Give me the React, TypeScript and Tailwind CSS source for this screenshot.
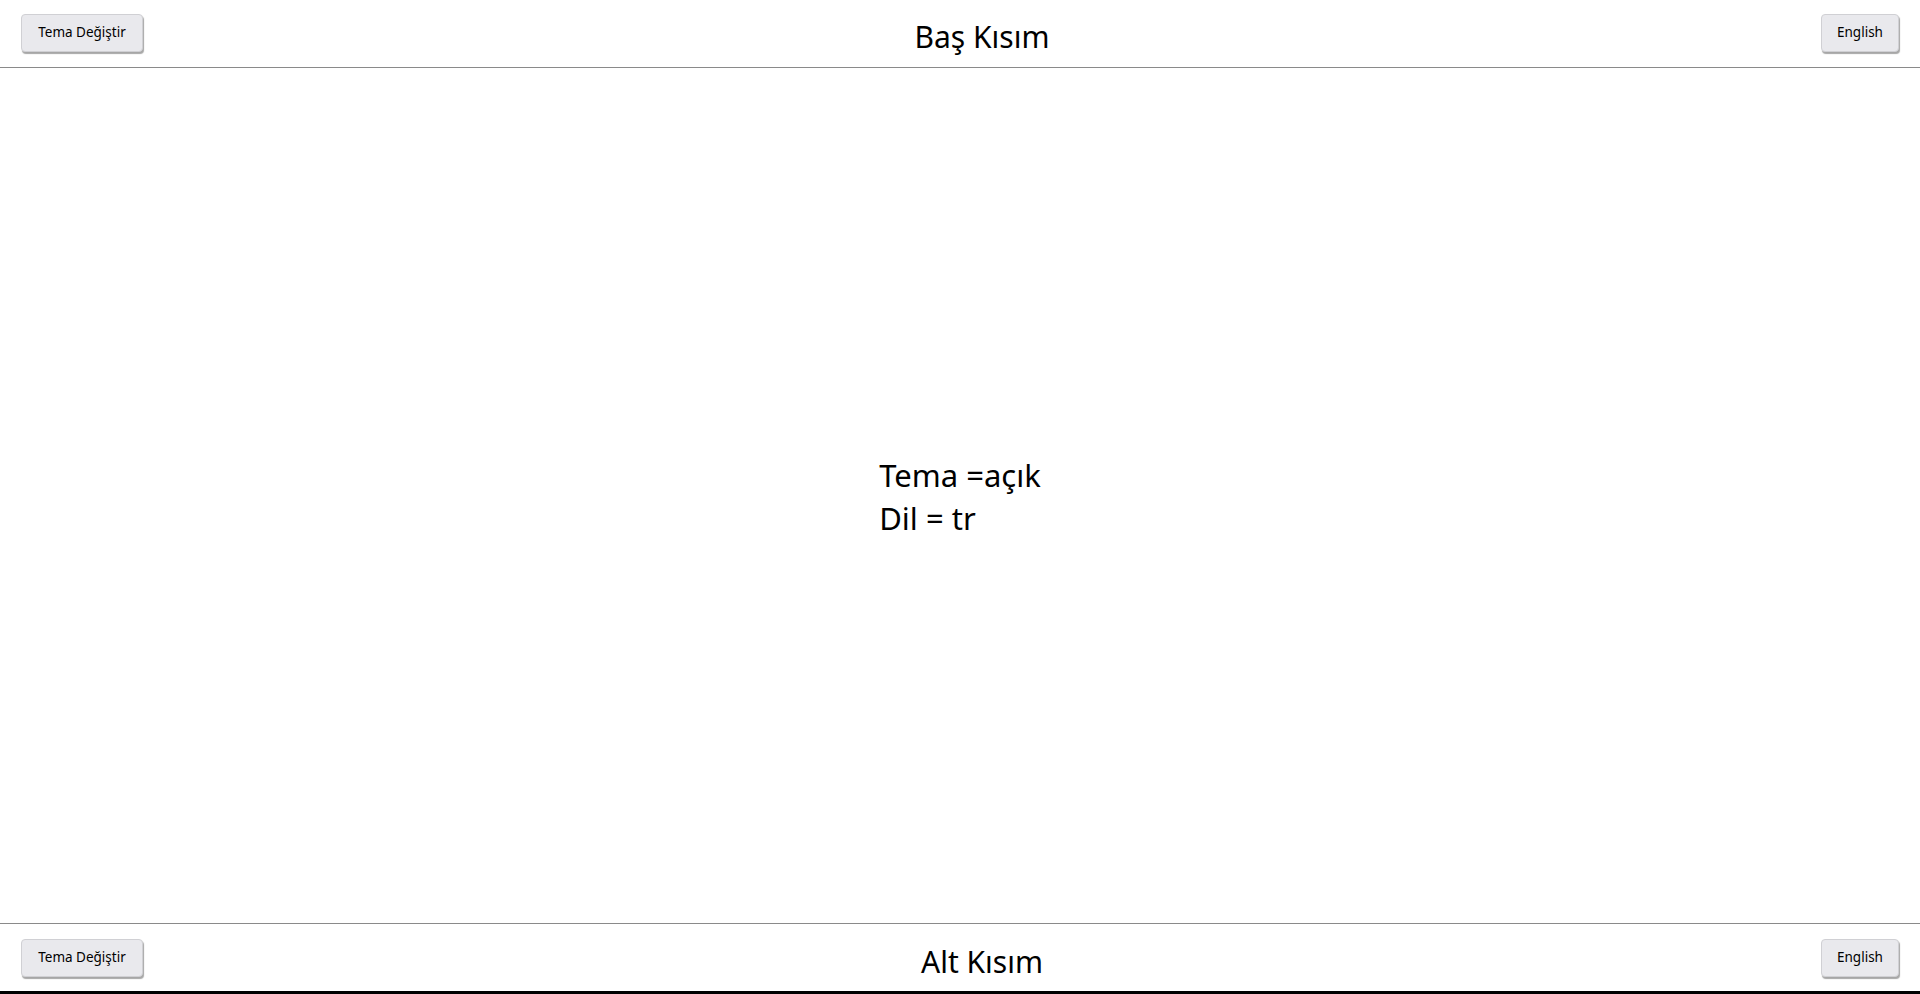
import React from "react";

const font = { fontFamily: '"Segoe UI", "Noto Sans", "Open Sans", sans-serif' };

function Btn({ children, w }: { children: React.ReactNode; w: string }) {
  return (
    <button
      className={`${w} h-[38px] rounded-[4px] border border-[#d0d0d4] bg-[#e9e9ed] text-[13.5px] text-black shadow-[1px_2px_1px_rgba(0,0,0,0.35)] flex items-center justify-center`}
    >
      {children}
    </button>
  );
}

function Bar({ title, top }: { title: string; top: boolean }) {
  return (
    <div
      className={`flex items-center justify-between px-[21px] h-[68px] ${
        top ? "border-b border-[#8a8a8a] pb-[2px]" : "border-t border-[#8a8a8a]"
      }`}
    >
      <Btn w="w-[122px]">Tema Değiştir</Btn>
      <div className="text-[30px] leading-none text-black pt-[8px]">{title}</div>
      <Btn w="w-[78px]">English</Btn>
    </div>
  );
}

export default function App() {
  return (
    <div style={font} className="h-[994px] w-full flex flex-col bg-white">
      <Bar title="Baş Kısım" top={true} />
      <main className="flex-1 flex items-center justify-center pt-[3px]">
        <div className="text-[31px] leading-[43px] text-black">
          <div>Tema =açık</div>
          <div>Dil = tr</div>
        </div>
      </main>
      <Bar title="Alt Kısım" top={false} />
      <div className="h-[3px] bg-black" />
    </div>
  );
}
